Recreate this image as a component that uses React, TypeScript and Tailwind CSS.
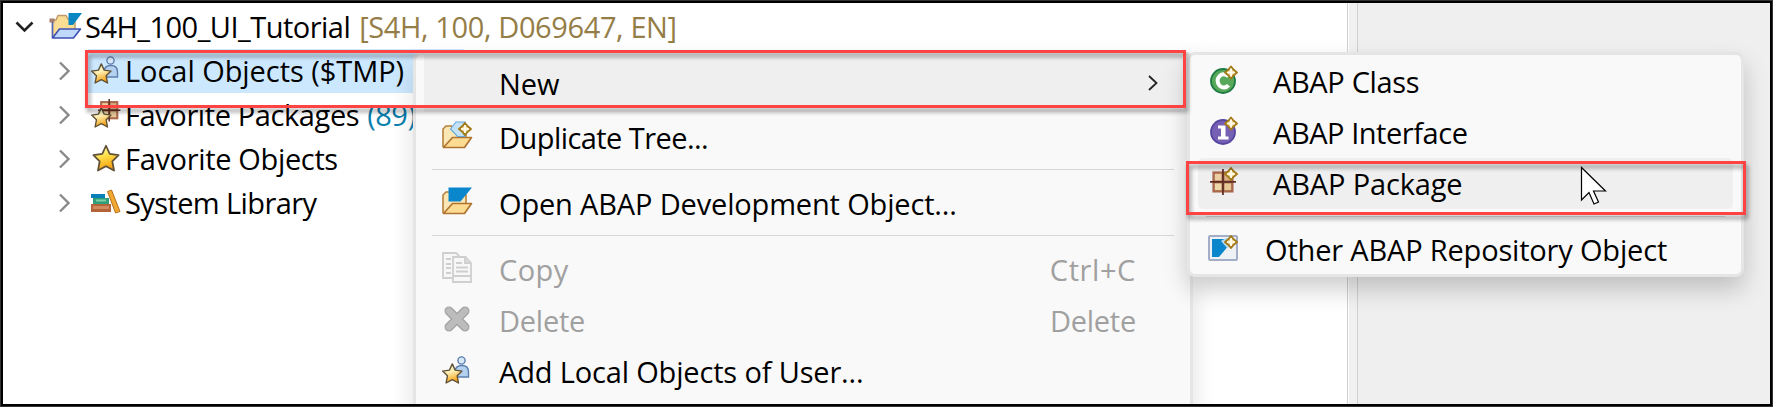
import type { ReactNode } from "react";

function Star({ fade = false }: { fade?: boolean }) {
  return (
    <>
      <defs>
        <linearGradient id={fade ? "starF" : "starA"} x1="0" y1="0" x2="0.3" y2="1">
          <stop offset="0.15" stopColor={fade ? "#e8eed2" : "#fff6a0"} />
          <stop offset="0.5" stopColor={fade ? "#fff0b4" : "#ffe04a"} />
          <stop offset="1" stopColor="#f5a012" />
        </linearGradient>
      </defs>
      <path
        d="M12 1.500 L15.200 8.500 L22.800 9.500 L17.400 14.800 L18.900 22.800 L12 19 L5.100 22.800 L6.600 14.800 L1.200 9.500 L8.800 8.500 Z"
        fill={fade ? "url(#starF)" : "url(#starA)"}
        stroke="#5f5036"
        strokeWidth="1.500"
        strokeLinejoin="round"
      />
    </>
  );
}

function Sparkle({ x, y }: { x: number; y: number }) {
  return (
    <g transform={`translate(${x} ${y})`}>
      <path
        d="M0 -6 L2.700 -2.700 L6 0 L2.700 2.700 L0 6 L-2.700 2.700 L-6 0 L-2.700 -2.700 Z"
        fill="#f6dca0"
        stroke="#a37a18"
        strokeWidth="1.900"
        strokeLinejoin="round"
      />
      <path d="M0 -4 V4 M-4 0 H4" stroke="#fffdf2" strokeWidth="1.700" />
    </g>
  );
}

function ProjectIcon() {
  return (
    <svg className="block h-[28px] w-[33px]" viewBox="0 0 33 28">
      <path d="M3.500 25 V8 H7 L9 3.500 H17 L19 7 H26 V18" fill="#f9dd94" stroke="#c09a6c" strokeWidth="1.400" />
      <rect x="0.500" y="6.500" width="5" height="4" fill="#a57d6c" />
      <path d="M3.500 10 V26" stroke="#5265b8" strokeWidth="1.600" />
      <path d="M10.500 17 H31.500 L24.500 26 H3.500 Z" fill="#c0d9fa" stroke="#3c50b4" strokeWidth="1.600" strokeLinejoin="round" />
      <path d="M19.500 1 H33 L24 13 H19.500 Z" fill="#0a86c2" />
    </svg>
  );
}

function UserStarIcon() {
  return (
    <svg className="block h-[30px] w-[30px]" viewBox="0 0 30 30">
      <path d="M13 22 V17 Q13 10.500 20 10.500 Q26.500 10.500 26.500 17 V22 Z" fill="#b4d1ef" stroke="#5d7fae" strokeWidth="1.400" />
      <circle cx="19.500" cy="5.500" r="3.600" fill="#d7e8f8" stroke="#5d7fae" strokeWidth="1.400" />
      <g transform="translate(-.5 7.500) scale(.9)">
        <Star fade />
      </g>
    </svg>
  );
}

function PackageGrid() {
  return (
    <>
      <rect x="2.500" y="2.500" width="22" height="22" fill="#a9684c" />
      <rect x="5" y="5" width="7" height="7" fill="#e9cfa2" />
      <rect x="15" y="5" width="7" height="7" fill="#d8b084" />
      <rect x="5" y="15" width="7" height="7" fill="#ecd7a8" />
      <rect x="15" y="15" width="7" height="7" fill="#e6c796" />
      <path d="M13.500 0 V27 M0 13.500 H27" stroke="#5e2c22" strokeWidth="1.800" />
    </>
  );
}

function FavPackageIcon() {
  return (
    <svg className="block h-[30px] w-[30px]" viewBox="0 0 30 30">
      <g transform="translate(7 0) scale(.83)">
        <PackageGrid />
      </g>
      <g transform="translate(-.5 7.500) scale(.9)">
        <Star fade />
      </g>
    </svg>
  );
}

function StarIcon() {
  return (
    <svg className="ml-px block h-[28px] w-[28px]" viewBox="0 0 24 24">
      <Star />
    </svg>
  );
}

function LibraryIcon() {
  return (
    <svg className="block h-[26px] w-[30px]" viewBox="0 0 30 26">
      <rect x="0" y="5" width="14" height="4" fill="#0b7fb8" />
      <rect x="2" y="9" width="16" height="6" fill="#2e9f78" />
      <rect x="5" y="10.500" width="10" height="2" fill="#7fd0a8" />
      <rect x="0" y="15" width="20" height="8" fill="#b5643a" />
      <rect x="2" y="17" width="16" height="3" fill="#d08a5e" />
      <path d="M16.500 2.500 L20.500 1 L29 22.500 L24.500 24 Z" fill="#f0a830" stroke="#b86f20" strokeWidth="1" />
    </svg>
  );
}

function Folder() {
  return (
    <>
      <path d="M1 26 V8 L4 5 H9.500 L12 8 H24 V16" fill="#fbe7b4" stroke="#b8813c" strokeWidth="1.600" />
      <path d="M1.500 26.500 L10.500 16.500 H29.500 L22.500 26.500 Z" fill="#fbdc92" stroke="#b07430" strokeWidth="1.700" strokeLinejoin="round" />
    </>
  );
}

function DuplicateIcon() {
  return (
    <svg className="block h-[30px] w-[31px]" viewBox="0 0 31 30">
      <Folder />
      <path d="M8.500 8 L14 1 H23 L19 8 L23 15.500 H15.500 Z" fill="#c3e2f6" stroke="#68a8d8" strokeWidth="1.200" />
      <Sparkle x={23} y={8} />
    </svg>
  );
}

function OpenIcon() {
  return (
    <svg className="block h-[30px] w-[31px]" viewBox="0 0 31 30">
      <Folder />
      <path d="M6.500 0.500 H30 L18.500 14.500 H6.500 Z" fill="#0a86cc" />
    </svg>
  );
}

function CopyIcon() {
  return (
    <svg className="block h-[31px] w-[31px]" viewBox="0 0 31 31" fill="#f7f7f7" stroke="#cfcfcf" strokeWidth="1.800">
      <path d="M1 1 H14 L19 6 V26 H1 Z" />
      <path d="M4 7 H9 M4 12 H9 M4 16 H9 M4 21 H9" />
      <path d="M11 5 H23.500 L29 11 V30 H11 Z" />
      <path d="M23 5 V11 H29" fill="#dcdcdc" />
      <path d="M14 11 H20 M14 15.500 H26 M14 19.500 H26 M11 24 H29" />
    </svg>
  );
}

function DeleteIcon() {
  return (
    <svg className="ml-px block h-[28px] w-[28px]" viewBox="0 0 28 28">
      <path d="M6 6 L22 22 M22 6 L6 22" stroke="#a2a2a2" strokeWidth="9" strokeLinecap="round" />
      <path d="M6 6 L22 22 M22 6 L6 22" stroke="#bcbcbc" strokeWidth="6.600" strokeLinecap="round" />
    </svg>
  );
}

function ClassIcon() {
  return (
    <svg className="block h-[30px] w-[30px]" viewBox="0 0 30 30">
      <circle cx="13" cy="16" r="12" fill="#58a85c" stroke="#1d7a44" strokeWidth="1.800" />
      <path d="M18.500 11.500 A6.200 6.600 0 1 0 18.500 20.200" fill="none" stroke="#fff" strokeWidth="4" />
      <Sparkle x={21} y={7.5} />
    </svg>
  );
}

function InterfaceIcon() {
  return (
    <svg className="block h-[30px] w-[30px]" viewBox="0 0 30 30">
      <circle cx="13" cy="16" r="12" fill="#7560b4" stroke="#5646a0" strokeWidth="1.800" />
      <path d="M8 9.500 H15.500 V20.500 H18.500 V23.500 H8 V20.500 H11 V12.500 H8 Z" fill="#fff" />
      <Sparkle x={21} y={7.5} />
    </svg>
  );
}

function PackageIcon() {
  return (
    <svg className="block h-[30px] w-[30px]" viewBox="0 0 30 30">
      <g transform="translate(0 2) scale(.96)">
        <PackageGrid />
      </g>
      <Sparkle x={21} y={7} />
    </svg>
  );
}

function RepositoryIcon() {
  return (
    <svg className="block h-[28px] w-[31px]" viewBox="0 0 31 28">
      <rect x="1" y="2" width="28" height="24" rx="1" fill="#eef2f5" stroke="#a3adc8" strokeWidth="2" />
      <path d="M4 5 H22 V10 L11 23 H4 Z" fill="#0a86cc" />
      <path d="M13 7 L18 4 H24 V12 L19 14 Z" fill="#b4d9f0" />
      <Sparkle x={23} y={8} />
    </svg>
  );
}

function TreeRow({ icon, children }: { icon: ReactNode; children: ReactNode }) {
  return (
    <div className="flex h-[44px] items-center">
      <svg className="ml-[53px] h-[20px] w-[14px] shrink-0" viewBox="0 0 14 20" fill="none" stroke="#8a8a8a" strokeWidth="2.400">
        <path d="M3 1.500 L11.500 10 L3 18.500" />
      </svg>
      <div className="-mt-[2px] ml-[20px] flex w-[34px] shrink-0 justify-start">{icon}</div>
      {children}
    </div>
  );
}

function MenuRow({ icon, label, shortcut, disabled }: { icon?: ReactNode; label: ReactNode; shortcut?: ReactNode; disabled?: boolean }) {
  return (
    <div className={`flex h-[51px] items-center pr-[54px] pl-[26px] ${disabled ? "text-[#a0a0a0]" : ""}`}>
      <div className="-mt-[4px] flex w-[57px] shrink-0">{icon}</div>
      <div className="grow">{label}</div>
      {shortcut}
    </div>
  );
}

export default function App() {
  return (
    <div className="relative flex h-[407px] w-[1773px] overflow-hidden bg-white font-['Open_Sans',sans-serif] text-[29px] leading-[44px] whitespace-nowrap text-black">
      <main className="flex w-[1347px] shrink-0 flex-col pt-[5px] pl-[4px]">
        <div className="flex h-[44px] items-center">
          <svg className="ml-[11px] h-[12px] w-[19px]" viewBox="0 0 19 12" fill="none" stroke="#222" strokeWidth="2.600">
            <path d="M1.500 1.500 L9.500 9.500 L17.500 1.500" />
          </svg>
          <div className="-mt-[2px] ml-[15px] w-[36px]">
            <ProjectIcon />
          </div>
          <span className="tracking-[-0.52px]">S4H_100_UI_Tutorial</span>
          <span className="ml-[9px] tracking-[-0.38px] text-[#957d47]">[S4H, 100, D069647, EN]</span>
        </div>
        <div className="w-[460px] bg-[linear-gradient(#cce8ff,#cce8ff)] bg-[position:84px_0] bg-no-repeat">
          <TreeRow icon={<UserStarIcon />}>
            <span className="tracking-[-0.05px]">Local Objects ($TMP)</span>
          </TreeRow>
        </div>
        <TreeRow icon={<FavPackageIcon />}>
          <span className="tracking-[-0.4px]">Favorite Packages</span>
          <span className="ml-[8px] tracking-[-0.5px] text-[#0a7fae]">(89)</span>
        </TreeRow>
        <TreeRow icon={<StarIcon />}>
          <span className="tracking-[-0.34px]">Favorite Objects</span>
        </TreeRow>
        <TreeRow icon={<LibraryIcon />}>
          <span className="tracking-[-0.6px]">System Library</span>
        </TreeRow>
      </main>
      <div className="flex w-[11px] border-x border-[#cfcfcf] bg-[#f1f1f1]">
        <div className="w-px bg-white" />
      </div>
      <aside className="grow bg-[#efefef]" />

      <div className="absolute top-[52px] left-[413px] h-[400px] w-[780px] rounded-t-[8px] border-3 border-[#e5e5e5] bg-[#f9f9f9] shadow-[0_10px_24px_rgba(0,0,0,0.13)]">
        <div className="mx-[8px] bg-[#efefef]">
          <div className="-mx-[8px] flex h-[57px] items-center pr-[32px] pl-[83px]">
            <span className="grow">New</span>
            <svg className="-mt-[2px] h-[16px] w-[10px]" viewBox="0 0 10 16" fill="none" stroke="#222" strokeWidth="1.800">
              <path d="M1 1 L8.500 8 L1 15" />
            </svg>
          </div>
        </div>
        <MenuRow icon={<DuplicateIcon />} label={<span className="tracking-[-0.56px]">Duplicate Tree...</span>} />
        <div className="mx-[16px] mt-[6px] mb-[8px] h-px bg-[#d7d7d7]" />
        <MenuRow icon={<OpenIcon />} label={<span className="tracking-[-0.16px]">Open ABAP Development Object...</span>} />
        <div className="mx-[16px] mt-[6px] mb-[8px] h-px bg-[#d7d7d7]" />
        <MenuRow
          disabled
          icon={<CopyIcon />}
          label={<span className="tracking-[0.4px]">Copy</span>}
          shortcut={<span className="tracking-[0.6px]">Ctrl+C</span>}
        />
        <MenuRow
          disabled
          icon={<DeleteIcon />}
          label={<span className="tracking-[-0.25px]">Delete</span>}
          shortcut={<span className="tracking-[-0.25px]">Delete</span>}
        />
        <MenuRow icon={<UserStarIcon />} label={<span className="tracking-[-0.16px]">Add Local Objects of User...</span>} />
      </div>

      <div className="absolute top-[52px] left-[1187px] h-[225px] w-[557px] rounded-[8px] border-3 border-[#e5e5e5] bg-[#f9f9f9] pt-px shadow-[0_12px_24px_rgba(0,0,0,0.2)]">
        <div className="flex h-[51px] items-center pl-[20px]">
          <div className="-mt-[3px] w-[63px]"><ClassIcon /></div>
          <span className="tracking-[-0.35px]">ABAP Class</span>
        </div>
        <div className="flex h-[51px] items-center pl-[20px]">
          <div className="-mt-[3px] w-[63px]"><InterfaceIcon /></div>
          <span className="tracking-[-0.45px]">ABAP Interface</span>
        </div>
        <div className="mx-[8px] flex h-[51px] items-center rounded-[5px] bg-[#efefef] pl-[12px]">
          <div className="-mt-[3px] w-[63px]"><PackageIcon /></div>
          <span className="tracking-[-0.15px]">ABAP Package</span>
        </div>
        <div className="mx-[16px] my-[7px] h-px bg-[#d7d7d7]" />
        <div className="flex h-[51px] items-center pl-[18px]">
          <div className="-mt-[4px] w-[57px]"><RepositoryIcon /></div>
          <span className="tracking-[-0.18px]">Other ABAP Repository Object</span>
        </div>
      </div>

      <div className="absolute top-[50px] left-[85px] h-[58px] w-[1101px] border-3 border-[#ff4343] drop-shadow-[2px_4px_2px_rgba(0,0,0,0.4)]" />
      <div className="absolute top-[161px] left-[1186px] h-[54px] w-[560px] border-3 border-[#ff4343] drop-shadow-[2px_4px_2px_rgba(0,0,0,0.4)]" />
      <svg className="absolute top-[166px] left-[1580px] h-[40px] w-[27px]" viewBox="0 0 27 40">
        <path d="M1.500 1.500 V34 L9 26.500 L14 38 L18.500 36 L13.500 25 H25.500 Z" fill="#fff" stroke="#000" strokeWidth="1.200" />
      </svg>
      <div className="pointer-events-none absolute inset-0 border border-[#333]">
        <div className="h-full border-2 border-black" />
      </div>
    </div>
  );
}
